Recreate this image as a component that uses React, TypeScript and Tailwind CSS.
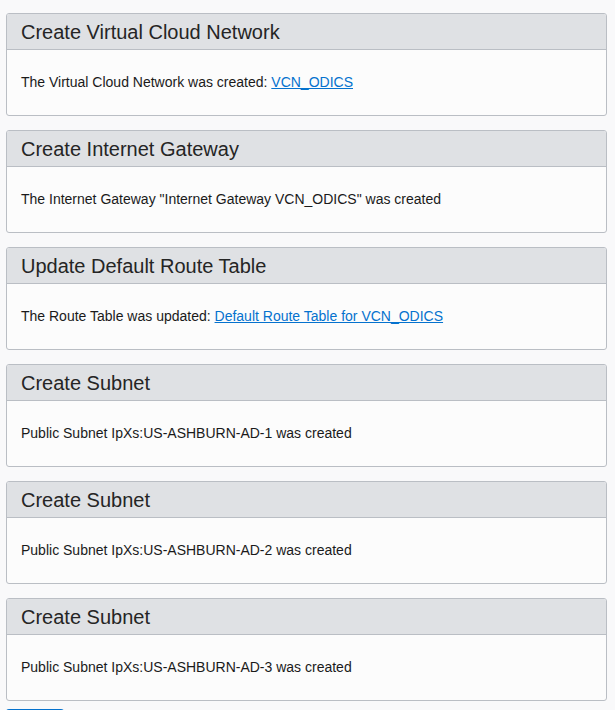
import React from "react";

type Item = { title: string; body: React.ReactNode };

const link = "text-[#0572ce] underline";

const items: Item[] = [
  {
    title: "Create Virtual Cloud Network",
    body: (
      <>
        The Virtual Cloud Network was created: <a className={link} href="#">VCN_ODICS</a>
      </>
    ),
  },
  {
    title: "Create Internet Gateway",
    body: <>The Internet Gateway "Internet Gateway VCN_ODICS" was created</>,
  },
  {
    title: "Update Default Route Table",
    body: (
      <>
        The Route Table was updated: <a className={link} href="#">Default Route Table for VCN_ODICS</a>
      </>
    ),
  },
  { title: "Create Subnet", body: <>Public Subnet IpXs:US-ASHBURN-AD-1 was created</> },
  { title: "Create Subnet", body: <>Public Subnet IpXs:US-ASHBURN-AD-2 was created</> },
  { title: "Create Subnet", body: <>Public Subnet IpXs:US-ASHBURN-AD-3 was created</> },
];

export default function App() {
  return (
    <div
      className="min-h-[710px] bg-[#f9f9fa] pt-[13px] pl-[6px]"
      style={{ fontFamily: '"Liberation Sans", Arial, sans-serif' }}
    >
      <div className="flex w-[601px] flex-col gap-[14px]">
        {items.map((it, i) => (
          <div key={i} className="overflow-hidden rounded-[3px] border border-[#babec4] bg-[#fcfcfc]">
            <div className="flex h-[36px] items-center border-b border-[#babec4] bg-[#dfe1e4] pl-[14px] text-[20px] text-[#252525]">
              <span>{it.title}</span>
            </div>
            <div className="flex h-[65px] items-center pl-[14px] text-[14px] text-[#1a1a1a]">
              <span>{it.body}</span>
            </div>
          </div>
        ))}
      </div>
      <div className="mt-[8px] h-[10px] w-[58px] rounded-t-[3px] bg-[#0572ce]" />
    </div>
  );
}
